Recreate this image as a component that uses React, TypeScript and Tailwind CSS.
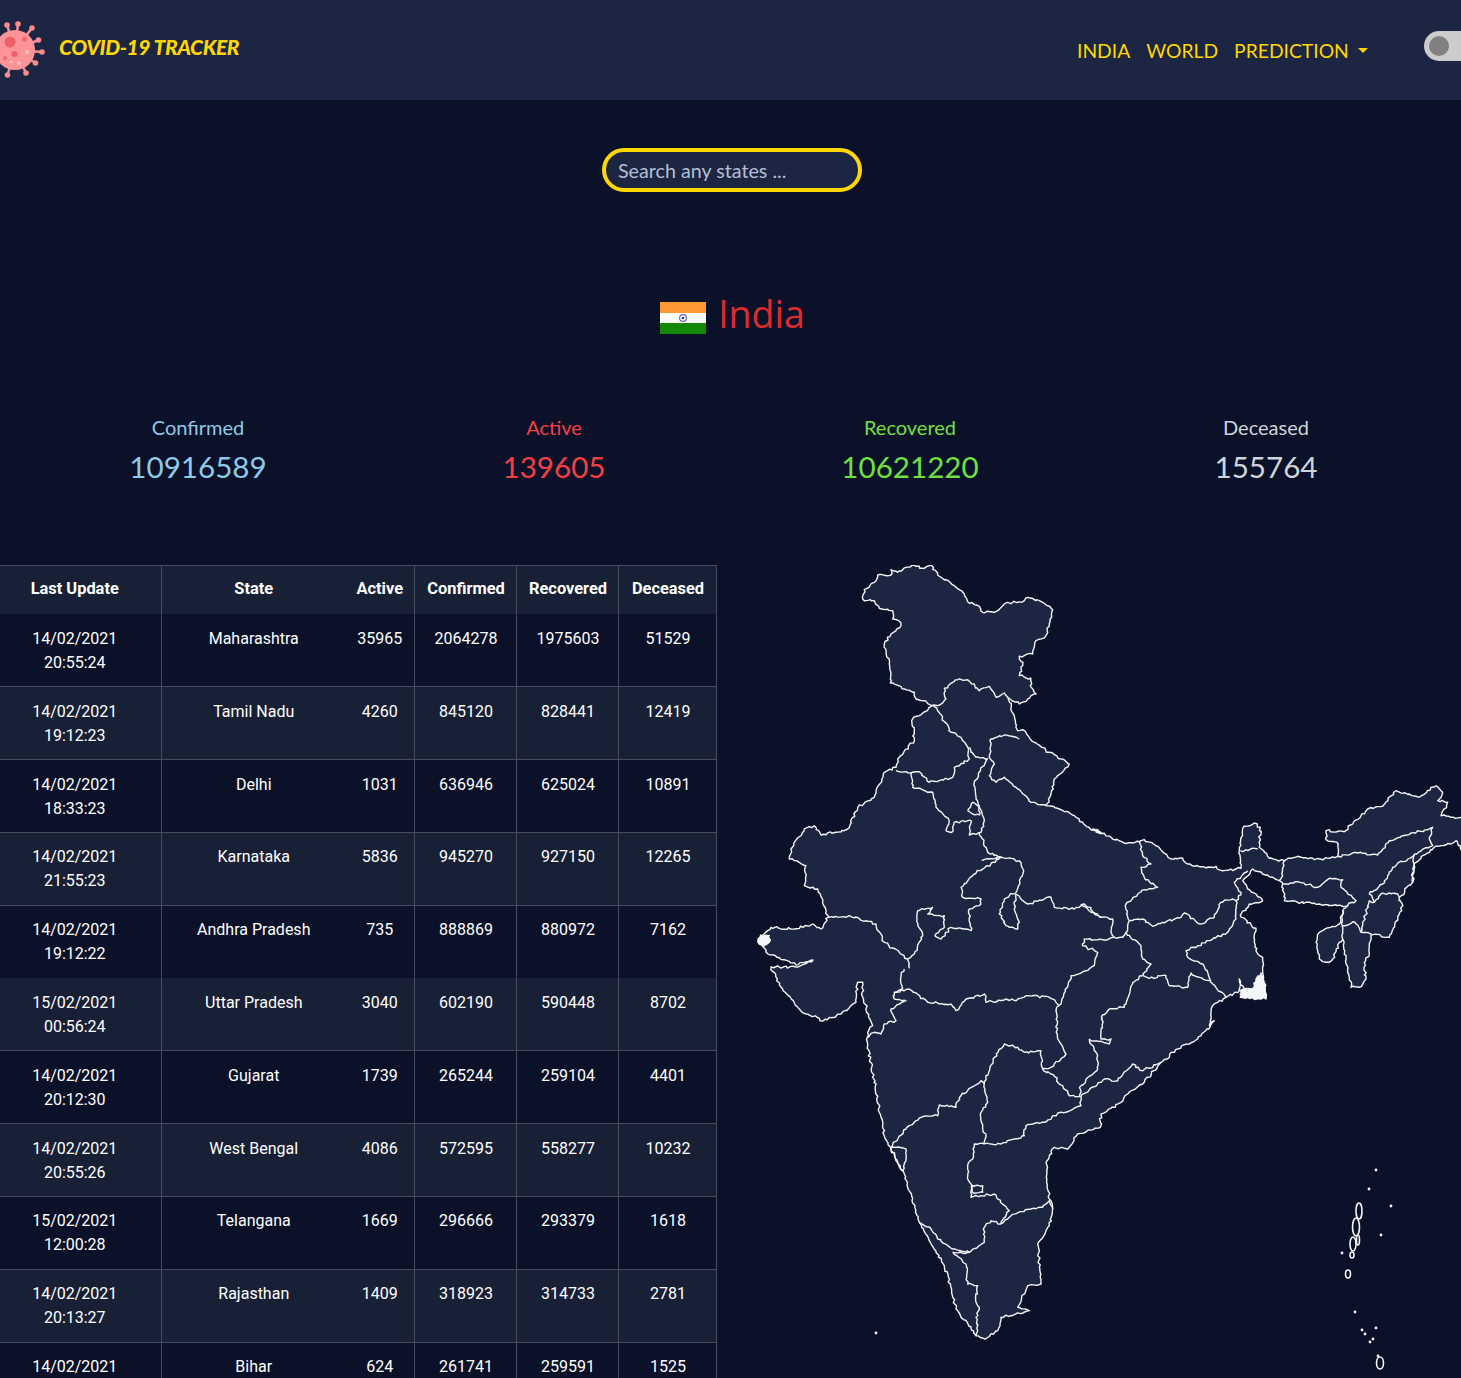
import { useState } from 'react';

const ROWS = [
  ['14/02/2021', '20:55:24', 'Maharashtra', '35965', '2064278', '1975603', '51529'],
  ['14/02/2021', '19:12:23', 'Tamil Nadu', '4260', '845120', '828441', '12419'],
  ['14/02/2021', '18:33:23', 'Delhi', '1031', '636946', '625024', '10891'],
  ['14/02/2021', '21:55:23', 'Karnataka', '5836', '945270', '927150', '12265'],
  ['14/02/2021', '19:12:22', 'Andhra Pradesh', '735', '888869', '880972', '7162'],
  ['15/02/2021', '00:56:24', 'Uttar Pradesh', '3040', '602190', '590448', '8702'],
  ['14/02/2021', '20:12:30', 'Gujarat', '1739', '265244', '259104', '4401'],
  ['14/02/2021', '20:55:26', 'West Bengal', '4086', '572595', '558277', '10232'],
  ['15/02/2021', '12:00:28', 'Telangana', '1669', '296666', '293379', '1618'],
  ['14/02/2021', '20:13:27', 'Rajasthan', '1409', '318923', '314733', '2781'],
  ['14/02/2021', '', 'Bihar', '624', '261741', '259591', '1525'],
];

const STATS = [
  { label: 'Confirmed', value: '10916589', color: 'text-[#8ecae6]' },
  { label: 'Active', value: '139605', color: 'text-[#f63e45]' },
  { label: 'Recovered', value: '10621220', color: 'text-[#6fe03f]' },
  { label: 'Deceased', value: '155764', color: 'text-[#ced4da]' },
];

// map traced from three crops, each with its own offset, scale 1/3
type Pt = [number, number];
const frame = (ox: number, oy: number) => (v: number[]): Pt[] => {
  const out: Pt[] = [];
  for (let i = 0; i < v.length; i += 2) out.push([ox + v[i] / 3, oy + v[i + 1] / 3]);
  return out;
};
const N = frame(740, 550);
const E = frame(1080, 770);
const S = frame(840, 970);

function rough(points: Pt[], closed = false) {
  let seed = Math.round(points[0][0] * 7 + points[0][1] * 13) + 1;
  const rnd = () => {
    seed = (seed * 16807) % 2147483647;
    return (seed % 1000) / 1000 - 0.5;
  };
  const pts = closed ? [...points, points[0]] : points;
  let d = `M${pts[0][0].toFixed(1)} ${pts[0][1].toFixed(1)}`;
  for (let i = 1; i < pts.length; i++) {
    const [x0, y0] = pts[i - 1];
    const [x1, y1] = pts[i];
    const steps = Math.max(1, Math.round(Math.hypot(x1 - x0, y1 - y0) / 2.5));
    for (let s = 1; s <= steps; s++) {
      const t = s / steps;
      const j = s === steps ? 0 : 2.4;
      d += `L${(x0 + (x1 - x0) * t + rnd() * j).toFixed(1)} ${(y0 + (y1 - y0) * t + rnd() * j).toFixed(1)}`;
    }
  }
  return closed ? d + 'Z' : d;
}

const OUTLINE: Pt[] = [
  ...N([365,150, 370,122, 400,100, 410,78, 450,78, 450,62, 470,70, 520,48, 545,58, 570,48, 590,78, 640,110, 670,135, 680,158, 715,172, 725,190, 760,190, 790,165, 850,155, 862,145, 905,160, 935,182, 925,225, 915,260, 885,275, 875,315, 835,322, 845,350, 835,380, 870,388, 868,410, 885,435, 860,450, 835,465, 800,445, 820,500, 830,545, 845,542, 875,578, 925,610, 985,645, 940,690, 930,735, 915,770, 950,778, 1000,800, 1050,842, 1080,850]),
  ...E([35,180, 90,205, 130,222, 175,218, 190,212, 230,232, 270,270, 305,268, 320,285, 375,297, 405,292, 425,305, 480,298, 475,245, 485,178, 520,162, 538,175, 535,235, 565,268, 610,275, 650,262, 700,272, 770,262, 772,225, 735,212, 735,185, 790,188, 815,165, 860,120, 905,112, 945,65, 1015,85, 1065,50, 1085,70, 1070,95, 1100,100, 1080,140, 1143,148, 1160,150, 1160,240, 1143,245, 1125,215, 1110,225, 1060,235, 1005,280, 995,300, 995,340, 955,385, 965,410, 925,505, 870,495, 865,555, 850,580, 855,630, 835,655, 810,655, 800,600, 785,510, 775,520, 755,570, 735,580, 715,570, 705,520, 715,490, 775,465, 785,425, 800,410, 715,405, 610,395, 605,345, 595,335, 545,315, 515,300, 485,335, 500,360, 525,375, 545,395, 505,405, 478,440, 525,478, 520,520, 530,555, 545,565, 545,610, 555,685, 480,685, 475,630, 490,660, 435,685, 395,710, 385,770, 400,755, 350,810, 290,840]),
  ...S([960,280, 905,345, 860,375, 840,400, 780,435, 778,475, 710,495, 680,540, 640,535, 615,580, 625,690, 635,720, 625,770, 590,825, 600,945, 560,950, 530,1015, 565,1025, 480,1045, 470,1085, 430,1110, 405,1100, 345,1020, 310,890, 265,815, 235,760, 190,615, 130,500, 80,230, 80,190, 95,170, 65,85, 65,40, 50,40, 45,100, 0,135]),
  [822, 1022], [800, 1012], [780, 988], [770, 968], [795, 968], [812, 961], [795, 966], [767, 955], [757, 940],
  ...N([90,1135, 160,1140, 215,1125, 240,1140, 262,1105, 230,1020, 190,1010, 195,950, 145,930, 150,900, 190,840, 220,830, 240,858, 320,840, 350,775, 400,745, 430,670, 465,655, 470,630, 520,575, 515,510, 575,470, 550,455, 525,450, 520,430, 448,402, 445,345, 430,285, 450,255, 480,230, 480,222, 455,210, 455,185, 415,178, 400,155, 370,155]),
];

const BORDERS: Pt[][] = [
  N([575,468, 590,470, 615,450, 610,418, 650,392, 680,392, 715,425, 745,412, 765,445, 790,432, 800,445]),
  N([575,468, 590,485, 630,550, 660,565, 680,595, 705,625, 740,628]),
  N([835,570, 790,558, 750,570, 745,625, 760,645, 745,680, 765,700, 790,685, 830,720, 870,760, 915,770]),
  N([465,665, 510,672, 535,668, 565,700, 635,685, 640,655, 685,630, 680,595]),
  N([510,672, 515,715, 575,730, 585,775, 625,815, 615,845, 635,848, 640,820, 690,815, 685,858, 720,850, 730,815, 705,750, 700,700, 740,628]),
  N([680,785, 695,760, 715,770, 715,798, 695,795, 680,785]),
  N([715,850, 740,910, 780,925, 835,935, 848,965, 825,1030, 790,1050, 775,1095, 795,1130, 830,1140, 835,1120, 820,1080, 825,1035]),
  N([722,935, 780,925, 700,975, 660,1015, 665,1045, 720,1050, 720,1065, 685,1080, 690,1145, 630,1135, 600,1170, 582,1160, 610,1135, 610,1100, 560,1095, 575,1075, 530,1085, 530,1130, 545,1160, 520,1215, 500,1230]),
  N([262,1105, 330,1103, 405,1125, 430,1180, 500,1230, 505,1258]),
  N([825,1035, 860,1065, 930,1045, 940,1075, 1000,1080, 1030,1065, 1080,1105]),
  E([0,405, 30,430, 60,445, 95,450, 90,490, 100,505, 125,505, 135,490, 145,455]),
  E([175,218, 185,260, 210,285, 180,295, 190,325, 230,355, 190,362, 135,405, 145,455]),
  E([145,455, 185,450, 215,472, 245,460, 300,445, 310,432, 355,465, 400,445, 420,400, 455,390, 465,395, 480,370, 460,340, 500,305]),
  E([465,395, 465,450, 440,490, 350,530, 315,545, 320,565, 365,585, 390,635]),
  E([135,490, 180,530, 185,570, 210,585, 185,615]),
  E([185,615, 205,628, 255,620, 265,650, 320,655, 330,612, 390,640, 435,685]),
  E([185,620, 155,640, 130,715, 85,720, 60,745]),
  E([100,505, 80,512, 10,510, 5,530, 50,550, 40,590, 0,612]),
  E([478,245, 530,240]),
  E([610,275, 605,320, 595,335]),
  E([770,262, 830,252, 890,258, 925,215, 1055,175, 1045,205, 1055,230, 1000,255]),
  E([1000,255, 995,340]),
  E([1000,258, 935,295, 905,345, 865,375, 880,400, 900,375, 950,375, 955,385]),
  E([605,345, 650,338, 710,355, 745,328, 785,332, 780,355, 825,395, 800,410]),
  E([785,470, 822,460, 840,490, 870,495]),
  E([840,490, 865,395, 880,400]),
  E([785,425, 785,510]),
  S([720,12, 690,20, 660,105, 645,125, 650,210, 675,255, 630,295, 605,300]),
  S([160,70, 205,60, 260,100, 330,105, 345,125, 375,90, 430,75, 435,100, 495,90, 525,95, 555,80, 625,85, 655,110]),
  S([190,0, 180,20, 185,60, 160,70, 160,90, 195,95, 150,120, 165,155, 130,165, 120,195, 100,190, 80,205]),
  S([745,210, 805,225, 810,210, 780,210, 785,145]),
  S([745,210, 770,260, 770,300, 720,350, 715,380]),
  S([150,535, 195,480, 240,445, 290,440, 295,408, 345,415, 355,385, 420,335, 430,345]),
  S([150,535, 165,575, 185,605, 195,575, 195,540, 150,535]),
  S([430,345, 460,265, 490,225, 530,235, 550,250, 600,245, 605,300, 630,315, 665,350, 685,380, 720,382]),
  S([430,345, 440,400, 420,430, 425,480, 435,495, 430,525]),
  S([430,525, 480,525, 550,500, 555,470, 610,460, 640,440, 720,410, 720,382, 790,330, 830,335, 875,285, 905,305, 960,280]),
  S([430,525, 400,525, 395,570, 380,590, 380,630, 395,650, 390,685, 420,680, 460,675, 505,725, 480,765]),
  S([390,650, 425,650, 425,670, 395,670, 390,650]),
  S([480,765, 510,740, 570,720, 605,715, 625,695, 635,720]),
  S([480,765, 450,755, 430,775, 430,820, 385,850, 335,850]),
  S([235,760, 270,780, 290,810, 335,840, 385,850]),
  S([335,850, 375,885, 380,945, 410,950, 405,1000, 415,1015, 405,1045, 410,1085, 405,1100]),
];

// sundarbans and kutch read as solid white at this size
const BLOBS: Pt[][] = [
  E([478,685, 482,662, 515,660, 525,630, 540,612, 550,640, 555,690]),
  N([50,1178, 60,1160, 85,1160, 85,1180, 66,1192]),
];

const ISLANDS = [
  [1358, 1212, 3, 8], [1355, 1228, 3.5, 9], [1352, 1245, 3, 7], [1351, 1256, 2, 3], [1347, 1275, 2.5, 4], [1379, 1364, 3.5, 6], [1357, 1241, 1.5, 5],
];
const DOTS = [
  [1375, 1171], [1368, 1190], [1390, 1207], [1380, 1236], [1341, 1254], [1354, 1313], [1361, 1331], [1364, 1335], [1375, 1329], [1372, 1340], [1369, 1343], [1377, 1357], [875, 1334],
];

function IndiaMap() {
  return (
    <svg viewBox="740 566 724 812" className="ml-[24px] h-[812px] w-[724px] shrink-0" fill="none" stroke="#f4f5f7" strokeWidth="1.4" strokeLinejoin="round">
      <path d={rough(OUTLINE, true)} fill="#1c2541" />
      {BORDERS.map((b, i) => (
        <path key={i} d={rough(b)} />
      ))}
      {BLOBS.map((b, i) => (
        <path key={i} d={rough(b, true)} fill="#f4f5f7" />
      ))}
      {ISLANDS.map(([x, y, rx, ry], i) => (
        <ellipse key={i} cx={x} cy={y} rx={rx} ry={ry} strokeWidth="1.6" />
      ))}
      {DOTS.map(([x, y], i) => (
        <circle key={i} cx={x} cy={y} r="1.4" fill="#f4f5f7" stroke="none" />
      ))}
    </svg>
  );
}

function VirusLogo() {
  const spikes = [
    [7, 25], [18, 24], [32, 28], [38.5, 40], [42, 52], [35.5, 63], [26, 73], [7.5, 75],
  ];
  return (
    <svg viewBox="0 0 46 100" className="h-[100px] w-[46px] shrink-0">
      {spikes.map(([x, y]) => (
        <g key={`${x}-${y}`}>
          <line x1="15" y1="50" x2={x} y2={y} stroke="#f98c8f" strokeWidth="2.5" />
          <circle cx={x} cy={y} r="2.8" fill="#f98c8f" />
        </g>
      ))}
      <circle cx="15" cy="50" r="20" fill="#fb9398" />
      <circle cx="10" cy="42" r="5.5" fill="#ef5f68" />
      <circle cx="24.5" cy="39" r="2.6" fill="#ef6a72" />
      <circle cx="14.5" cy="54" r="3" fill="#ef5f68" />
      <circle cx="5" cy="58" r="2" fill="#ef6a72" />
      <circle cx="27" cy="52" r="2" fill="#fdb9bc" />
      <circle cx="19" cy="63" r="2" fill="#fdb9bc" />
      <circle cx="11" cy="62" r="1.4" fill="#fdb9bc" />
    </svg>
  );
}

function Flag() {
  return (
    <svg viewBox="0 0 46 32" className="ml-px mt-2 h-8 w-[46px] shrink-0">
      <rect width="46" height="11" fill="#ff9933" />
      <rect y="11" width="46" height="10" fill="#ffffff" />
      <rect y="21" width="46" height="11" fill="#138808" />
      <circle cx="23" cy="16" r="3.4" fill="none" stroke="#6a6ab0" strokeWidth="1.2" />
      <circle cx="23" cy="16" r="1.3" fill="#30308a" />
    </svg>
  );
}

export default function App() {
  const [query, setQuery] = useState('');

  return (
    <div className="h-[1378px] overflow-hidden bg-[#0a1128] font-['Lato',sans-serif]">
      <div className="w-[1464px]">
        <nav className="flex h-[100px] items-center bg-[#1c2541]">
          <VirusLogo />
          <span className="ml-[13px] -mt-1.5 w-[181px] shrink-0 whitespace-nowrap text-[21px] font-black italic tracking-[-0.4px] text-[#ffd700]">COVID-19 TRACKER</span>
          <div className="ml-[837px] mt-0.5 flex shrink-0 items-center gap-4 text-[19.3px] text-[#ffd700]">
            <a>INDIA</a>
            <a>WORLD</a>
            <a className="flex items-center">
              PREDICTION
              <span className="ml-[9px] -mt-0.5 border-x-[5px] border-t-[5px] border-x-transparent border-t-[#ffd700]" />
            </a>
          </div>
          <div className="ml-[56px] -mt-2 flex h-[30px] w-[60px] shrink-0 items-center rounded-full bg-[#cccccc] pl-[5px]">
            <span className="h-5 w-5 rounded-full bg-[#808080]" />
          </div>
        </nav>

        <div className="mt-12 flex justify-center">
          <input
            value={query}
            onChange={(e) => setQuery(e.target.value)}
            placeholder="Search any states ..."
            className="h-11 w-[260px] rounded-full border-4 border-[#ffd700] bg-[#1c2541] px-3 text-[19.7px] text-[#ced4da] outline-none placeholder:text-[#b4bfd2]"
          />
        </div>

        <div className="mt-[97px] flex items-center justify-center gap-3">
          <Flag />
          <h1 className="font-['Open_Sans',sans-serif] text-[37.5px] leading-[50px] text-[#dd2c2f]">India</h1>
        </div>

        <div className="mt-[73px] grid grid-cols-4 px-5 text-center">
          {STATS.map((s) => (
            <div key={s.label} className={s.color}>
              <div className="text-xl leading-[30px]">{s.label}</div>
              <div className="mt-px text-[29.6px] leading-[48px]">{s.value}</div>
            </div>
          ))}
        </div>

        <div className="mt-[74px] flex">
          <table className="-ml-[13px] w-[729px] shrink-0 table-fixed border-collapse font-['Roboto',sans-serif] text-base text-white">
            <colgroup>
              <col className="w-[174px]" />
              <col className="w-[183px]" />
              <col className="w-[70px]" />
              <col className="w-[102px]" />
              <col className="w-[102px]" />
              <col className="w-[98px]" />
            </colgroup>
            <thead>
              <tr className="h-12 border-t border-[#474d5a] bg-[#182036] pl-0.5 text-[16.4px] font-bold">
                <th className="border-r border-[#474d5a] pl-0.5">Last Update</th>
                <th className="pl-0.5">State</th>
                <th className="border-r border-[#474d5a] pl-0.5">Active</th>
                <th className="border-r border-[#474d5a] pl-0.5">Confirmed</th>
                <th className="border-r border-[#474d5a] pl-0.5">Recovered</th>
                <th className="border-r border-[#474d5a] pl-0.5">Deceased</th>
              </tr>
            </thead>
            <tbody>
              {ROWS.map((r, i) => {
                // the original rows are 72.8px high, so text and lines drift by a pixel
                const pad = [0, 1, 2, 5, 6, 7].includes(i) ? 'pt-[13px]' : 'pt-3';
                return (
                  <tr key={r[2]} className={`border-b ${i === 4 ? 'h-[72px] border-transparent' : 'h-[73px] border-[#474d5a]'} ${i % 2 === 0 ? 'bg-[#0a1128]' : 'bg-[#182036]'}`}>
                    <td className={`border-r border-[#474d5a] ${pad} pb-2 pl-0.5 text-center align-top leading-6`}>
                      {r[0]}
                      {r[1] && <br />}
                      {r[1]}
                    </td>
                    <td className={`${pad} pl-0.5 text-center align-top leading-6`}>{r[2]}</td>
                    <td className={`border-r border-[#474d5a] ${pad} pl-0.5 text-center align-top leading-6`}>{r[3]}</td>
                    <td className={`border-r border-[#474d5a] ${pad} pl-0.5 text-center align-top leading-6`}>{r[4]}</td>
                    <td className={`border-r border-[#474d5a] ${pad} pl-0.5 text-center align-top leading-6`}>{r[5]}</td>
                    <td className={`border-r border-[#474d5a] ${pad} pl-0.5 text-center align-top leading-6`}>{r[6]}</td>
                  </tr>
                );
              })}
            </tbody>
          </table>
          <IndiaMap />
        </div>
      </div>
    </div>
  );
}
